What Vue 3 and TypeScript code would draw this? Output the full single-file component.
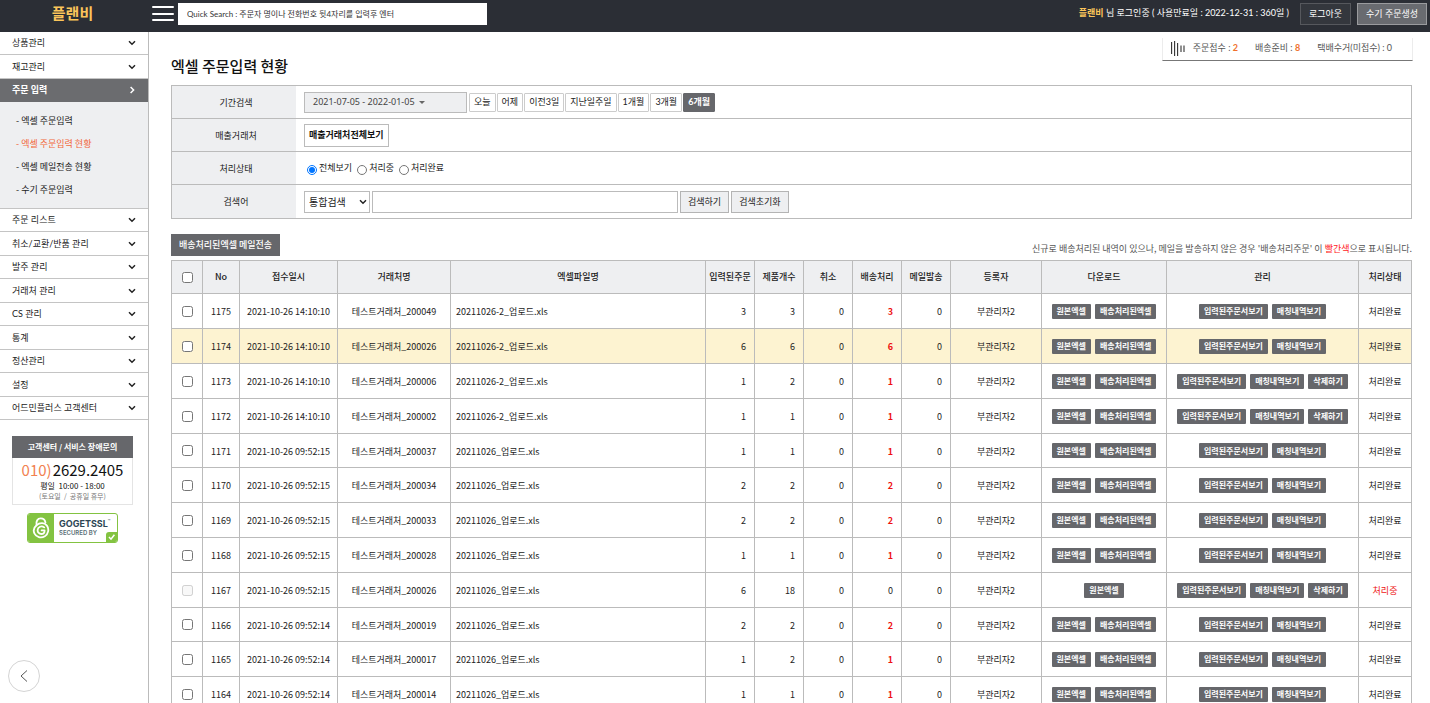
<script setup lang="ts">
import { ref } from 'vue'

interface Row {
  no: number
  time: string
  client: string
  orders: number
  items: number
  shipped: number
  file: string
  removable?: boolean
  pending?: boolean
}

const upperMenu = ['상품관리', '재고관리']
const subMenu = ['엑셀 주문입력', '엑셀 주문입력 현황', '엑셀 메일전송 현황', '수기 주문입력']
const lowerMenu = [
  '주문 리스트',
  '취소/교환/반품 관리',
  '발주 관리',
  '거래처 관리',
  'CS 관리',
  '통계',
  '정산관리',
  '설정',
  '어드민플러스 고객센터',
]
const periods = ['오늘', '어제', '이전3일', '지난일주일', '1개월', '3개월', '6개월']
const states = ['전체보기', '처리중', '처리완료']
const columns = [
  'No',
  '접수일시',
  '거래처명',
  '엑셀파일명',
  '입력된주문',
  '제품개수',
  '취소',
  '배송처리',
  '메일발송',
  '등록자',
  '다운로드',
  '관리',
  '처리상태',
]

const activePeriod = ref('6개월')
const activeState = ref('전체보기')
const keyword = ref('')
const quick = ref('')

const f2 = '20211026-2_업로드.xls'
const f1 = '20211026_업로드.xls'
const rows: Row[] = [
  { no: 1175, time: '14:10:10', client: '200049', orders: 3, items: 3, shipped: 3, file: f2 },
  { no: 1174, time: '14:10:10', client: '200026', orders: 6, items: 6, shipped: 6, file: f2 },
  { no: 1173, time: '14:10:10', client: '200006', orders: 1, items: 2, shipped: 1, file: f2, removable: true },
  { no: 1172, time: '14:10:10', client: '200002', orders: 1, items: 1, shipped: 1, file: f2, removable: true },
  { no: 1171, time: '09:52:15', client: '200037', orders: 1, items: 1, shipped: 1, file: f1 },
  { no: 1170, time: '09:52:15', client: '200034', orders: 2, items: 2, shipped: 2, file: f1 },
  { no: 1169, time: '09:52:15', client: '200033', orders: 2, items: 2, shipped: 2, file: f1 },
  { no: 1168, time: '09:52:15', client: '200028', orders: 1, items: 1, shipped: 1, file: f1 },
  { no: 1167, time: '09:52:15', client: '200026', orders: 6, items: 18, shipped: 0, file: f1, removable: true, pending: true },
  { no: 1166, time: '09:52:14', client: '200019', orders: 2, items: 2, shipped: 2, file: f1 },
  { no: 1165, time: '09:52:14', client: '200017', orders: 1, items: 2, shipped: 1, file: f1 },
  { no: 1164, time: '09:52:14', client: '200014', orders: 1, items: 1, shipped: 1, file: f1 },
]
</script>

<template>
  <div class="page">
    <header class="top">
      <a class="logo" href="#">플랜비</a>
      <button class="burger" type="button" aria-label="메뉴"><i></i><i></i><i></i></button>
      <input
        v-model="quick"
        class="quick"
        type="text"
        aria-label="Quick Search"
        placeholder="Quick Search : 주문자 명이나 전화번호 뒷4자리를 입력후 엔터"
      />
      <p class="account"><b>플랜비</b> 님 로그인중 ( 사용만료일 : 2022-12-31 : 360일 )</p>
      <button class="topbtn" type="button">로그아웃</button>
      <button class="topbtn light" type="button">수기 주문생성</button>
    </header>

    <div class="body">
      <aside class="side">
        <nav>
          <div class="menu">
            <a v-for="m in upperMenu" :key="m" class="item" href="#">
              {{ m }}
              <svg class="chev" viewBox="0 0 8 6"><path d="M1 1.2 L4 4.2 L7 1.2" /></svg>
            </a>
            <a class="item current" href="#">
              주문 입력
              <svg class="chev" viewBox="0 0 8 8"><path d="M2.6 1 L5.6 4 L2.6 7" /></svg>
            </a>
          </div>
          <div class="submenu">
            <a v-for="(s, i) in subMenu" :key="s" href="#" :class="{ on: i === 1 }">- {{ s }}</a>
          </div>
          <div class="menu lower">
            <a v-for="m in lowerMenu" :key="m" class="item" href="#">
              {{ m }}
              <svg class="chev" viewBox="0 0 8 6"><path d="M1 1.2 L4 4.2 L7 1.2" /></svg>
            </a>
          </div>
        </nav>
        <section class="center">
          <h2>고객센터 / 서비스 장애문의</h2>
          <p class="phone"><span>010)</span>2629.2405</p>
          <p class="hours">평일&nbsp; 10:00 - 18:00</p>
          <p class="closed">(토요일 &nbsp;/&nbsp; 공휴일 휴무)</p>
        </section>
        <div class="ssl">
          <span class="ssl-mark">
            <svg viewBox="0 0 18 22">
              <path
                d="M4.6 8.2 C3.8 4.2 5.6 1.4 8.8 1.4 C11.4 1.4 13 3 13.4 5.4"
                fill="none"
                stroke="#fff"
                stroke-width="1.9"
                stroke-linecap="round"
              />
              <path
                d="M4.6 8.2 C8 5.2 12.6 5.6 14.9 8.6 C17.4 12 16.4 17 12.8 19.3 C9 21.6 4.2 20.2 2.4 16.4 C1.1 13.4 2 10.2 4.6 8.2 M12.2 10.4 C9.6 8.4 5.8 9.8 5.6 13 C5.5 15.6 7.4 17 9.2 17 C11.2 17 12.6 15.6 12.6 13.4 H9.6"
                fill="none"
                stroke="#fff"
                stroke-width="1.8"
                stroke-linecap="round"
                stroke-linejoin="round"
              />
            </svg>
          </span>
          <span class="ssl-text"><b>GOGETSSL<sup>™</sup></b><small>SECURED BY</small></span>
          <span class="ssl-check">
            <svg viewBox="0 0 11 10"><path d="M3 5 L5 7.2 L8.4 2.8" fill="none" stroke="#fff" stroke-width="1.5" /></svg>
          </span>
        </div>
        <button class="collapse" type="button" aria-label="접기">
          <svg viewBox="0 0 8 12"><path d="M7 0.5 L1 6 L7 11.5" fill="none" stroke="#555" stroke-width="1" /></svg>
        </button>
      </aside>

      <main class="main">
        <div class="stats">
          <svg viewBox="0 0 14 15">
            <path d="M0.6 1 V13 M3.6 0 V15 M6.6 2 V15 M10 4.5 V11 M13 4.5 V11" stroke="#333" stroke-width="1.1" />
          </svg>
          <span>주문접수 : <b>2</b></span>
          <span>배송준비 : <b>8</b></span>
          <span>택배수거(미접수) : 0</span>
        </div>
        <h1>엑셀 주문입력 현황</h1>

        <form class="filters" @submit.prevent>
          <div class="frow">
            <span class="flabel">기간검색</span>
            <div class="fbody">
              <button class="range" type="button">2021-07-05 - 2022-01-05 <i></i></button>
              <div class="periods">
                <button
                  v-for="p in periods"
                  :key="p"
                  type="button"
                  :class="{ on: p === activePeriod }"
                  @click="activePeriod = p"
                >
                  {{ p }}
                </button>
              </div>
            </div>
          </div>
          <div class="frow">
            <span class="flabel">매출거래처</span>
            <div class="fbody"><button class="vendors" type="button">매출거래처전체보기</button></div>
          </div>
          <div class="frow">
            <span class="flabel">처리상태</span>
            <div class="fbody radios">
              <label v-for="s in states" :key="s">
                <input v-model="activeState" type="radio" name="state" :value="s" />{{ s }}
              </label>
            </div>
          </div>
          <div class="frow tall">
            <label class="flabel" for="keyword">검색어</label>
            <div class="fbody search">
              <span class="select">
                <select aria-label="검색 구분">
                  <option>통합검색</option>
                </select>
                <svg class="chev" viewBox="0 0 8 6"><path d="M1 1.2 L4 4.2 L7 1.2" /></svg>
              </span>
              <input id="keyword" v-model="keyword" type="text" />
              <button class="gray" type="submit">검색하기</button>
              <button class="gray" type="reset">검색초기화</button>
            </div>
          </div>
        </form>

        <div class="tools">
          <button class="send" type="button">배송처리된엑셀 메일전송</button>
          <p>
            신규로 배송처리된 내역이 있으나, 메일을 발송하지 않은 경우 '배송처리주문' 이 <em>빨간색</em>으로 표시됩니다.
          </p>
        </div>

        <table>
          <colgroup>
            <col class="w-check" />
            <col class="w-no" />
            <col class="w-date" />
            <col class="w-client" />
            <col />
            <col class="w-num" span="5" />
            <col class="w-user" />
            <col class="w-down" />
            <col class="w-manage" />
            <col class="w-state" />
          </colgroup>
          <thead>
            <tr>
              <th><input type="checkbox" aria-label="전체 선택" /></th>
              <th v-for="c in columns" :key="c" scope="col">{{ c }}</th>
            </tr>
          </thead>
          <tbody>
            <tr v-for="r in rows" :key="r.no" :class="{ hover: r.no === 1174 }">
              <td class="ctl"><input type="checkbox" :disabled="r.pending" :aria-label="`${r.no} 선택`" /></td>
              <td>{{ r.no }}</td>
              <td>2021-10-26 {{ r.time }}</td>
              <td>테스트거래처_{{ r.client }}</td>
              <td class="left">{{ r.file }}</td>
              <td class="num">{{ r.orders }}</td>
              <td class="num">{{ r.items }}</td>
              <td class="num">0</td>
              <td class="num"><b v-if="r.shipped">{{ r.shipped }}</b><template v-else>0</template></td>
              <td class="num">0</td>
              <td>부관리자2</td>
              <td class="ctl">
                <div class="tags">
                  <button type="button">원본엑셀</button>
                  <button v-if="!r.pending" type="button">배송처리된엑셀</button>
                </div>
              </td>
              <td class="ctl">
                <div class="tags">
                  <button type="button">입력된주문서보기</button>
                  <button type="button">매칭내역보기</button>
                  <button v-if="r.removable" type="button">삭제하기</button>
                </div>
              </td>
              <td :class="{ red: r.pending }">{{ r.pending ? '처리중' : '처리완료' }}</td>
            </tr>
          </tbody>
        </table>
      </main>
    </div>
  </div>
</template>

<style>
body {
  margin: 0;
  background: #fff;
}
</style>

<style scoped>
* {
  box-sizing: border-box;
}
.page {
  height: 100vh;
  overflow: hidden;
  display: flex;
  flex-direction: column;
  font-family: 'Noto Sans CJK KR', 'Noto Sans', sans-serif;
  font-size: 9px;
  line-height: 14px;
  color: #222;
}
p,
h1,
h2 {
  margin: 0;
}
a {
  color: inherit;
  text-decoration: none;
}
button,
input,
select {
  font: inherit;
  color: inherit;
  margin: 0;
  padding: 0;
  border-radius: 0;
}
button {
  white-space: nowrap;
  cursor: pointer;
}

/* top bar */
.top {
  flex: none;
  height: 32px;
  display: flex;
  align-items: flex-start;
  padding: 3px 3px 0 0;
  background: #2b2e35;
  color: #fff;
  font-family: Lato, 'Noto Sans CJK KR', sans-serif;
}
.logo {
  width: 145px;
  margin-right: 7px;
  text-align: center;
  font-size: 15px;
  font-weight: 700;
  line-height: 20px;
  color: #fbc55a;
}
.burger {
  width: 22px;
  height: 20px;
  padding: 3px 0 2px;
  border: 0;
  background: none;
  display: flex;
  flex-direction: column;
  justify-content: space-between;
}
.burger i {
  height: 2px;
  border-radius: 1px;
  background: #fff;
}
.quick {
  width: 309px;
  height: 22px;
  margin-left: 4px;
  padding: 0 8px;
  border: 1px solid #fff;
  background: #fff;
  color: #333;
  font-size: 8px;
}
.quick::placeholder {
  color: #333;
  opacity: 1;
}
.account {
  margin-left: auto;
  margin-right: 11px;
  padding-top: 3px;
}
.account b {
  color: #fbc55a;
}
.topbtn {
  height: 22px;
  padding: 0 8px;
  border: 1px solid #56585d;
  background: #34373d;
  color: #fff;
}
.topbtn.light {
  margin-left: 6px;
  border-color: #9a9b9e;
  background: #696b70;
}

/* sidebar */
.body {
  flex: 1;
  display: flex;
  min-height: 0;
}
.side {
  position: relative;
  flex: none;
  width: 149px;
  border-right: 1px solid #bbb;
}
.menu .item {
  height: 23px;
  display: flex;
  align-items: center;
  justify-content: space-between;
  padding: 0 12px;
  border-bottom: 1px solid #c4c4c4;
  font-family: Lato, 'Noto Sans CJK KR', sans-serif;
}
.menu .item + .item {
  height: 24px;
}
.menu .item.current {
  height: 23px;
  border-color: #6b6c6f;
  background: #6b6c6f;
  color: #fff;
  font-weight: 700;
}
.chev {
  width: 8px;
  height: 8px;
  fill: none;
  stroke: #222;
  stroke-width: 1.5;
}
.current .chev {
  stroke: #fff;
}
.submenu {
  display: flex;
  flex-direction: column;
  padding: 7px 16px;
  border-bottom: 1px solid #c4c4c4;
  background: #eeeff1;
}
.submenu a {
  line-height: 23px;
}
.submenu .on {
  color: #f2683c;
}
.menu.lower .item {
  height: 23px;
}
.menu.lower .item:nth-child(2n) {
  height: 24px;
}
.center {
  margin: 16px 15px 0 12px;
  border: 1px solid #e4e4e4;
  border-top: 0;
  text-align: center;
  padding-bottom: 3px;
}
.center h2 {
  margin: 0 -1px;
  background: #66676b;
  color: #fff;
  font-size: 8px;
  font-weight: 700;
  line-height: 22px;
}
.phone {
  font-size: 15px;
  line-height: 23px;
  color: #111;
}
.phone span {
  color: #f2814f;
  margin-right: 1px;
}
.hours {
  font-size: 8px;
  line-height: 10px;
  color: #111;
}
.closed {
  font-size: 7px;
  line-height: 10px;
  color: #777;
}
.ssl {
  position: relative;
  display: flex;
  width: 91px;
  height: 30px;
  margin: 8px 0 0 27px;
  border: 1px solid #83c341;
  border-radius: 3px;
  overflow: hidden;
}
.ssl-mark {
  width: 26px;
  background: #83c341;
  display: flex;
  align-items: center;
  justify-content: center;
}
.ssl-mark svg {
  width: 18px;
  height: 22px;
}
.ssl-text {
  display: flex;
  flex-direction: column;
  padding: 5px 0 0 5px;
  font-family: Inter, sans-serif;
  color: #2d4654;
}
.ssl-text b {
  font-size: 9px;
  line-height: 10px;
  white-space: nowrap;
}
.ssl-text sup {
  font-size: 4px;
  line-height: 1px;
}
.ssl-text small {
  font-size: 6px;
  font-weight: 600;
  line-height: 7px;
  color: #5b7078;
}
.ssl-check {
  position: absolute;
  right: 0;
  bottom: 0;
  width: 11px;
  height: 10px;
  border-top-left-radius: 3px;
  background: #83c341;
  display: flex;
}
.collapse {
  position: absolute;
  left: 8px;
  bottom: 11px;
  width: 32px;
  height: 32px;
  border: 1px solid #d4d4d4;
  border-radius: 50%;
  background: #fff;
  display: flex;
  align-items: center;
  justify-content: center;
}
.collapse svg {
  width: 8px;
  height: 12px;
}

/* main */
.main {
  position: relative;
  flex: 1;
  min-width: 0;
  padding: 22px 18px 0 22px;
}
.stats {
  position: absolute;
  top: 6px;
  right: 17px;
  display: flex;
  align-items: center;
  gap: 17px;
  height: 23px;
  padding: 0 20px 2px 8px;
  border: 1px solid #ececec;
  border-top: 0;
  border-bottom-color: #777;
  color: #555;
  font-family: Lato, 'Noto Sans CJK KR', sans-serif;
}
.stats svg {
  width: 14px;
  height: 15px;
  margin-right: -9px;
}
.stats b {
  color: #f0702c;
}
h1 {
  font-size: 15px;
  font-weight: 500;
  line-height: 24px;
  color: #111;
}
.filters {
  margin-top: 7px;
  border: 1px solid #bbb;
  border-bottom: 0;
  font-family: Lato, 'Noto Sans CJK KR', sans-serif;
}
.frow {
  display: flex;
  height: 33px;
  border-bottom: 1px solid #bbb;
}
.frow.tall {
  height: 34px;
}
.flabel {
  flex: none;
  width: 124px;
  display: flex;
  align-items: center;
  justify-content: center;
  padding: 1px 0 0 4px;
  background: #eeeff1;
}
.fbody {
  flex: 1;
  display: flex;
  align-items: center;
  padding-left: 8px;
}
.range {
  width: 163px;
  height: 21px;
  margin-right: 2px;
  padding-left: 8px;
  border: 1px solid #bbb;
  background: #eeeff1;
  color: #444;
  text-align: left;
  font-family: 'Noto Sans', sans-serif;
}
.range i {
  display: inline-block;
  margin-left: 2px;
  border: 3px solid transparent;
  border-top-color: #666;
  border-bottom: 0;
  vertical-align: middle;
}
.periods {
  display: flex;
  gap: 1px;
}
.periods button {
  height: 19px;
  padding: 0 4px;
  border: 1px solid #ccc;
  border-radius: 1px;
  background: #fff;
}
.periods .on {
  border-color: #66676b;
  background: #66676b;
  color: #fff;
  font-weight: 700;
}
.vendors {
  height: 23px;
  padding: 0 4px;
  border: 1px solid #bbb;
  background: #fff;
  font-weight: 700;
  color: #111;
}
.radios {
  gap: 5px;
  padding-left: 11px;
}
.radios label {
  display: flex;
  align-items: center;
  gap: 2px;
}
.radios input {
  width: 10px;
  height: 10px;
  margin-top: 4px;
}
.search {
  gap: 2px;
}
.select {
  position: relative;
  width: 66px;
}
.select select {
  appearance: none;
  display: block;
  width: 100%;
  height: 22px;
  padding: 0 4px;
  border: 1px solid #bbb;
  background: #fff;
  font-size: 10px;
}
.select .chev {
  position: absolute;
  right: 3px;
  top: 7px;
  pointer-events: none;
}
.search input {
  width: 306px;
  height: 22px;
  padding: 0 5px;
  border: 1px solid #bbb;
}
.gray {
  height: 22px;
  padding: 0 7px;
  border: 1px solid #b4b4b4;
  background: #eeeff1;
}
.tools {
  display: flex;
  justify-content: space-between;
  align-items: flex-end;
  margin: 15px 0 4px;
}
.send {
  height: 22px;
  padding: 0 8px;
  border: 0;
  background: #66676b;
  color: #fff;
  font-weight: 500;
}
.tools p {
  color: #555;
}
.tools em {
  font-style: normal;
  color: #f22;
}

/* orders table */
table {
  width: 100%;
  table-layout: fixed;
  border-collapse: collapse;
}
.w-check {
  width: 31px;
}
.w-no {
  width: 37px;
}
.w-date {
  width: 98px;
}
.w-client {
  width: 113px;
}
.w-num {
  width: 49px;
}
.w-user {
  width: 91px;
}
.w-down {
  width: 125px;
}
.w-manage {
  width: 192px;
}
.w-state {
  width: 53px;
}
th,
td {
  padding: 0;
  border: 1px solid #bbb;
  text-align: center;
  vertical-align: middle;
  white-space: nowrap;
}
th {
  height: 33px;
  background: #eeeff1;
  font-weight: 500;
}
td {
  height: 35px;
  padding-top: 2px;
}
td.ctl {
  padding-top: 0;
}
tr:nth-child(5n) td {
  height: 34px;
}
.hover td {
  background: #fdf3d1;
}
td.left {
  padding-left: 5px;
  text-align: left;
}
td.num {
  padding-right: 8px;
  text-align: right;
}
.num b {
  color: #e11;
}
.red {
  color: #e11;
}
table input {
  display: block;
  width: 11px;
  height: 11px;
  margin: 0 auto;
}
.tags {
  display: flex;
  justify-content: center;
  gap: 4px;
}
.tags button {
  height: 15px;
  padding: 0 5px;
  border: 0;
  border-radius: 1px;
  background: #66676b;
  color: #fff;
  font-size: 8px;
  font-weight: 700;
}
</style>
